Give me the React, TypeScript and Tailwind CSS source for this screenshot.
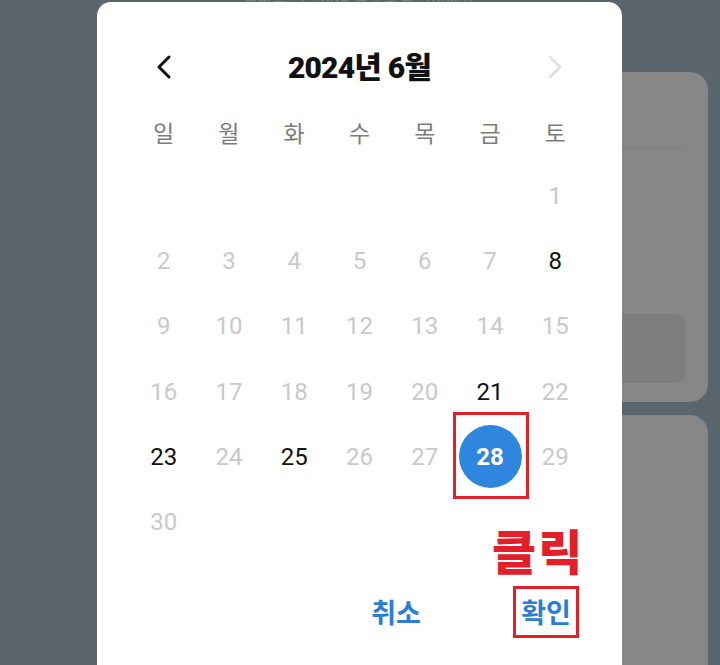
import React from "react";

const KR = { fontFamily: 'Roboto, "Noto Sans CJK KR", sans-serif' };
const KRB = { fontFamily: '"Noto Sans CJK KR", Roboto, sans-serif' };

const weekdays = ["일", "월", "화", "수", "목", "금", "토"];
const active = new Set([8, 21, 23, 25]);

function Chevron({ dir, color }: { dir: "l" | "r"; color: string }) {
  return (
    <svg width="20" height="26" viewBox="0 0 20 26" fill="none">
      {dir === "l" ? (
        <polyline points="15,3 5,13 15,23" stroke={color} strokeWidth="3" strokeLinecap="round" strokeLinejoin="round" />
      ) : (
        <polyline points="5,3 15,13 5,23" stroke={color} strokeWidth="3" strokeLinecap="round" strokeLinejoin="round" />
      )}
    </svg>
  );
}

export default function App() {
  const cells: (number | null)[] = [null, null, null, null, null, null];
  for (let d = 1; d <= 30; d++) cells.push(d);
  while (cells.length % 7) cells.push(null);

  return (
    <div className="relative w-[720px] h-[665px] overflow-hidden bg-[#5b656e]" style={KR}>
      {/* background page */}
      <div className="flex flex-col pl-[160px] pr-[12px]">
        <div className="mt-[-10px] h-[20px] text-[16px] leading-[20px] text-[#7c848a] text-center pr-[150px]">
          날짜를 선택하여 일정을 확인하세요
        </div>
        <div className="mt-[62px] h-[330px] rounded-[18px] bg-[#878787] flex flex-col">
          <div className="h-[75px]" />
          <div className="mx-[22px] h-px bg-[#808080]" />
          <div className="flex-1" />
          <div className="mx-[22px] mb-[19px] h-[69px] rounded-[10px] bg-[#7e7e7e]" />
        </div>
        <div className="mt-[13px] h-[300px] rounded-[18px] bg-[#878787]" />
      </div>

      {/* modal */}
      <div className="absolute left-[97px] top-[2px] w-[525px] h-[700px] rounded-[14px] bg-white px-[34px]">
        <div className="mt-[40px] h-[50px] grid grid-cols-7 items-center">
          <div className="flex justify-center">
            <Chevron dir="l" color="#111111" />
          </div>
          <div className="col-span-5 text-center text-[30px] font-black text-[#111111] tracking-[-0.8px]">
            2024년 6월
          </div>
          <div className="flex justify-center">
            <Chevron dir="r" color="#e2e2e2" />
          </div>
        </div>

        <div className="mt-[9px] h-[62px] grid grid-cols-7 items-center">
          {weekdays.map((w) => (
            <div key={w} className="text-center text-[23px] text-[#7c7c7c]" style={KRB}>
              {w}
            </div>
          ))}
        </div>

        <div className="grid grid-cols-7">
          {cells.map((d, i) => (
            <div key={i} className="relative h-[65.3px] flex items-center justify-center">
              {d === 28 ? (
                <>
                  <div className="w-[63px] h-[63px] rounded-full bg-[#2e86de] flex items-center justify-center text-white text-[24px] font-bold">
                    28
                  </div>
                  <div className="absolute left-[-4px] right-[-6px] top-[-12px] bottom-[-10px] border-[3px] border-[#e3202a]" />
                </>
              ) : d ? (
                <span className={`text-[24px] ${active.has(d) ? "text-[#111111]" : "text-[#c9c9c9]"}`}>{d}</span>
              ) : null}
            </div>
          ))}
        </div>

        <div className="mt-[31px] flex justify-end pr-[9px] gap-[84px]">
          <button className="w-[66px] h-[52px] flex items-center justify-center text-[27px] font-bold text-[#2a7fd4]" style={KRB}>
            취소
          </button>
          <button className="relative w-[66px] h-[52px] flex items-center justify-center text-[27px] font-bold text-[#2a7fd4]" style={KRB}>
            확인
            <span className="absolute inset-0 border-[3px] border-[#e3202a]" />
          </button>
        </div>

        <div className="absolute left-[395px] top-[523px] text-[48px] leading-none font-black tracking-[2px] text-[#e3202a]" style={KRB}>
          클릭
        </div>
      </div>
    </div>
  );
}
